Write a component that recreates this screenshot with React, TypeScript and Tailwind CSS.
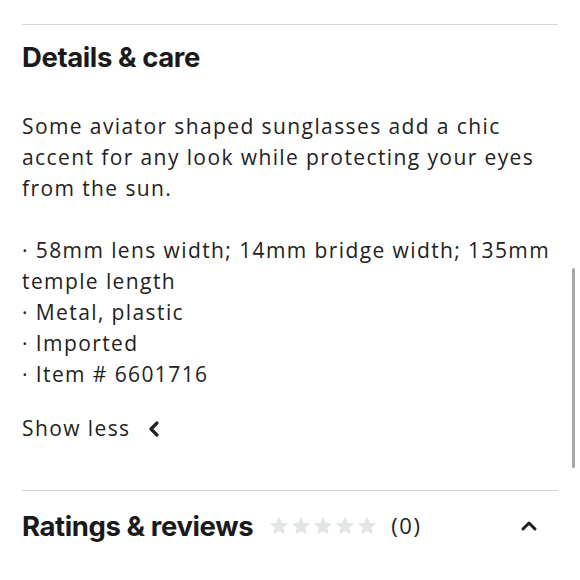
import { ChevronLeft, ChevronUp } from 'lucide-react';

const BULLETS = [
  '58mm lens width; 14mm bridge width; 135mm temple length',
  'Metal, plastic',
  'Imported',
  'Item # 6601716',
];

function Star() {
  return (
    <svg width="22" height="22" viewBox="0 0 24 24" fill="#e3e6e6">
      <path d="M12 2l3 6.5 7 .8-5.3 4.7 1.5 7L12 17.5 5.8 21l1.5-7L2 9.3l7-.8z" />
    </svg>
  );
}

export default function App() {
  return (
    <div className="relative w-[580px] h-[580px] overflow-hidden bg-white text-[#1f1f1f]">
      {/* Scrollbar */}
      <div className="absolute right-[5px] top-[268px] h-[200px] w-[3px] rounded-full bg-[#a8a8a8]" />

      <div className="px-[22px] pt-[24px]">
        <div className="h-px bg-[#d6d6d6]" />

        <h2 className="mt-[16px] font-['Inter',sans-serif] font-bold text-[27.5px] leading-[32px] tracking-[-0.4px] text-[#1a1a1a]">
          Details &amp; care
        </h2>

        <div className="mt-[38px] font-['Open_Sans',sans-serif] text-[21px] leading-[31px] tracking-[1.4px] text-[#222]">
          <p>
            Some aviator shaped sunglasses add a chic accent for any look while protecting your eyes from the sun.
          </p>
          <ul className="mt-[31px]">
            {BULLETS.map((b) => (
              <li key={b}>· {b}</li>
            ))}
          </ul>
        </div>

        <button className="mt-[23px] flex items-center gap-[12px] font-['Open_Sans',sans-serif] text-[21px] leading-[31px] tracking-[1.4px] text-[#222]">
          Show less
          <ChevronLeft size={24} strokeWidth={3.2} />
        </button>

        <div className="mt-[46px] h-px bg-[#d6d6d6]" />

        <div className="mt-[18px] flex items-center">
          <h2 className="font-['Inter',sans-serif] font-bold text-[27.5px] leading-[32px] tracking-[-0.4px] text-[#1a1a1a]">
            Ratings &amp; reviews
          </h2>
          <div className="ml-[15px] flex items-center">
            <Star />
            <Star />
            <Star />
            <Star />
            <Star />
          </div>
          <span className="ml-[13px] font-['Open_Sans',sans-serif] text-[22px] tracking-[1.6px] text-[#222]">(0)</span>
          <ChevronUp size={24} strokeWidth={3} className="ml-auto mr-[17px]" />
        </div>
      </div>
    </div>
  );
}
